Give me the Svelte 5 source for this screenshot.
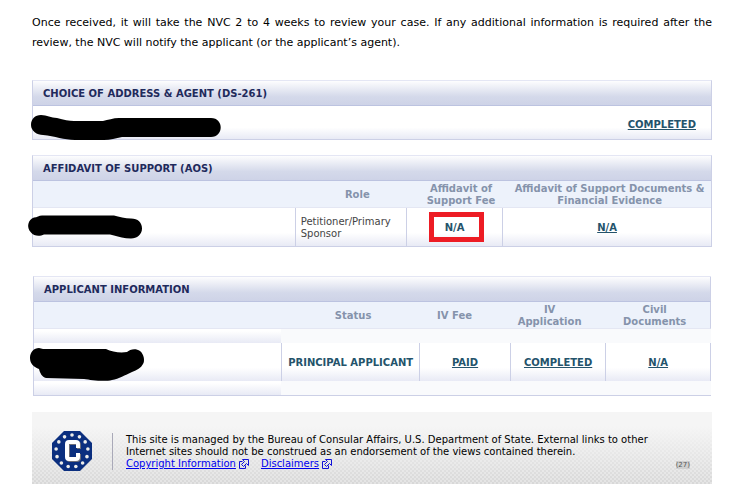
<script lang="ts">
  const stars = Array.from({ length: 13 }, (_, i) => {
    const angle = (i / 13) * Math.PI * 2 - Math.PI / 2;
    return { x: 20 + Math.cos(angle) * 16, y: 20 + Math.sin(angle) * 16 };
  });

  const footerLinks = ['Copyright Information', 'Disclaimers'];
</script>

<main>
  <p class="intro">
    Once received, it will take the NVC 2 to 4 weeks to review your case. If any additional
    information is required after the review, the NVC will notify the applicant (or the
    applicant’s agent).
  </p>

  <section class="panel address">
    <h2>CHOICE OF ADDRESS &amp; AGENT (DS-261)</h2>
    <div class="address-row shaded">
      <svg class="redaction" width="194" height="28" viewBox="29 109 194 28" aria-hidden="true">
        <path d="M41 115 C47 115 51 118 57 118 C64 120 69 121 74 121 L103 121 C108 120 113 118 119 118 L211 118 C224 118 224 137 211 137 L122 137 C116 138 110 140 104 140 L75 140 C64 140 55 136 43 135 C37 135 31 131 31 125 C31 119 35 115 41 115 Z" />
      </svg>
      <a href="#ds261">COMPLETED</a>
    </div>
  </section>

  <section class="panel affidavit">
    <h2>AFFIDAVIT OF SUPPORT (AOS)</h2>
    <table>
      <colgroup>
        <col class="w-name" /><col class="w-role" /><col class="w-fee" /><col />
      </colgroup>
      <thead>
        <tr>
          <th></th>
          <th class="role-head">Role</th>
          <th class="fee-head">Affidavit of<br />Support Fee</th>
          <th class="evidence-head">Affidavit of Support Documents &amp;<br />Financial Evidence</th>
        </tr>
      </thead>
      <tbody>
        <tr class="shaded">
          <td>
            <svg class="redaction" width="116" height="25" viewBox="29 214 116 25" aria-hidden="true">
              <path d="M42 215 L114 215 C119 216 125 218 131 218 C138 218 142 222 142 228 C142 234 137 238 131 238 C124 238 119 236 114 235 L110 234 L44 234 C40 236 34 236 31 232 C26 227 28 219 34 217 C37 217 39 215 42 215 Z" />
            </svg>
          </td>
          <td class="role">Petitioner/Primary Sponsor</td>
          <td><a class="plain" href="#fee">N/A</a><span class="marker"></span></td>
          <td><a href="#evidence">N/A</a></td>
        </tr>
      </tbody>
    </table>
  </section>

  <section class="panel applicants">
    <h2>APPLICANT INFORMATION</h2>
    <table>
      <colgroup>
        <col class="w-applicant" /><col class="w-status" /><col class="w-iv" /><col class="w-app" /><col />
      </colgroup>
      <thead>
        <tr>
          <th></th>
          <th class="status-head">Status</th>
          <th class="iv-head">IV Fee</th>
          <th class="app-head">IV<br />Application</th>
          <th class="civil-head">Civil<br />Documents</th>
        </tr>
      </thead>
      <tbody>
        <tr class="spacer"><td class="shaded"></td><td colspan="4"></td></tr>
        <tr class="shaded">
          <td>
            <svg class="redaction" width="116" height="34" viewBox="30 345 116 34" aria-hidden="true">
              <path d="M39 348 L43 349 L106 349 C112 352 120 353 127 352 C130 349 136 348 140 351 C144 354 145 361 143 364 C141 368 137 370 132 372 C125 375 119 379 112 380 C104 382 91 380 84 379 L46 378 C42 377 40 373 39 369 C34 367 30 364 30 358 C30 352 34 348 39 348 Z" />
            </svg>
          </td>
          <td class="status">PRINCIPAL APPLICANT</td>
          <td><a href="#paid">PAID</a></td>
          <td><a href="#application">COMPLETED</a></td>
          <td><a href="#documents">N/A</a></td>
        </tr>
        <tr class="spacer"><td class="shaded"></td><td colspan="4"></td></tr>
      </tbody>
    </table>
  </section>

  <footer>
    <svg class="seal" width="40" height="40" viewBox="0 0 40 40" role="img" aria-label="Consular Affairs">
      <polygon points="12,0 28,0 40,12 40,28 28,40 12,40 0,28 0,12" fill="#0b2f7f" />
      {#each stars as star}
        <circle cx={star.x} cy={star.y} r="1.8" fill="#eeeeea" />
      {/each}
      <path d="M27 18 V14 Q27 12 25 12 H18 Q16 12 16 14 V27 Q16 29 18 29 H25 Q27 29 27 27 V23" fill="none" stroke="#6f6f78" stroke-width="4" />
      <path d="M26 17 V13 Q26 11 24 11 H17 Q15 11 15 13 V26 Q15 28 17 28 H24 Q26 28 26 26 V22" fill="none" stroke="#fff" stroke-width="4" />
    </svg>
    <div class="notice">
      <p>
        This site is managed by the Bureau of Consular Affairs, U.S. Department of State. External links to other
        Internet sites should not be construed as an endorsement of the views contained therein.
      </p>
      <nav>
        {#each footerLinks as link}
          <span class="link">
            <a href="#{link}">{link}</a>
            <svg width="10" height="10" viewBox="0 0 10 10" fill="none" stroke="#1010d8" aria-hidden="true">
              <path d="M3.500 2.500 H0.500 V9.500 H6.500 V6.500" />
              <path d="M3.500 0.500 H9.500 V6.500 L7.500 4.500 L4.500 7.500 L2.500 5.500 L5.500 2.500 Z" />
            </svg>
          </span>
        {/each}
      </nav>
    </div>
    <small>(27)</small>
  </footer>
</main>

<style>
  :global(body) {
    background: #fff;
  }

  main {
    padding: 13px 26px 0 32px;
    font-family: Verdana, 'DejaVu Sans', sans-serif;
    font-size: 10px;
    line-height: 12px;
    color: #000;
  }

  .intro {
    margin: 0 0 27px;
    font-size: 11px;
    line-height: 20px;
    text-align: justify;
  }

  .panel {
    border: 1px solid #ccd0e6;
    border-top-color: #e4e6f4;
  }

  h2 {
    margin: 0;
    padding: 2px 10px 0;
    border-bottom: 1px solid #bcc3e0;
    background: linear-gradient(#fdfdfe, #d4d9ea 65%, #ced3e7);
    color: #1f2a5c;
    font-size: 10px;
    font-weight: bold;
    line-height: 22px;
  }

  .shaded {
    background: linear-gradient(#fff 65%, #e8eaf5);
  }

  .address {
    margin-bottom: 15px;
  }

  .address-row {
    position: relative;
    display: flex;
    align-items: center;
    justify-content: flex-end;
    box-sizing: border-box;
    height: 33px;
    padding: 4px 15px 0 0;
  }

  .panel a,
  .status {
    color: #24536b;
    font-weight: bold;
  }

  .panel a.plain {
    text-decoration: none;
  }

  table {
    width: 100%;
    table-layout: fixed;
    border-collapse: separate;
    border-spacing: 0;
  }

  th,
  td {
    box-sizing: border-box;
    padding: 2px 0 0;
  }

  th {
    height: 27px;
    border-bottom: 1px solid #e4e7f3;
    background: #edf2fb;
    color: #8593ab;
    white-space: nowrap;
  }

  td {
    position: relative;
    height: 38px;
    text-align: center;
  }

  td + td {
    border-left: 1px solid #ccd0e6;
  }

  .spacer td {
    height: 14px;
    border-left: 0;
  }

  .spacer .shaded {
    background: linear-gradient(#fff 15%, #e8eaf5);
  }

  .spacer td + td {
    background: #f9fafc;
  }

  .w-name {
    width: 38.6%;
  }

  .w-role {
    width: 16.4%;
  }

  .w-fee {
    width: 14.2%;
  }

  .w-applicant {
    width: 36.5%;
  }

  .w-status {
    width: 20.4%;
  }

  .w-iv {
    width: 13.4%;
  }

  .w-app {
    width: 14.1%;
  }

  .affidavit {
    margin-bottom: 29px;
  }

  .applicants {
    margin: 0 1px 16px;
    border-right: 0;
  }

  .applicants h2,
  .applicants th:last-child,
  .applicants tr:not(.spacer) td:last-child {
    border-right: 1px solid #ccd0e6;
  }

  .role-head,
  .fee-head {
    padding-left: 14px;
  }

  .evidence-head,
  .status-head {
    padding-left: 6px;
  }

  .iv-head {
    padding-right: 20px;
  }

  .app-head {
    padding-right: 16px;
  }

  .civil-head {
    padding-right: 6px;
  }

  .role {
    padding: 2px 5px 0;
    color: #444;
    text-align: left;
  }

  .status {
    white-space: nowrap;
  }

  .redaction {
    position: absolute;
    top: 50%;
    left: -4px;
    overflow: visible;
    transform: translateY(-50%);
  }

  .marker {
    position: absolute;
    top: 4px;
    left: 22px;
    width: 45px;
    height: 20px;
    border: 5px solid #ed1c24;
  }

  footer {
    display: flex;
    align-items: flex-start;
    min-height: 53px;
    padding: 19px 22px 0 20px;
    background:
      linear-gradient(#f5f5f5 20%, rgb(245 245 245 / 0%)),
      repeating-conic-gradient(#d8d8d8 0 25%, #e4e4e4 0 50%) 0 0 / 4px 4px;
  }

  .seal {
    flex: none;
  }

  .notice {
    flex: 1;
    margin: 2px 0 0 20px;
    padding: 1px 0 0 13px;
    border-left: 1px solid #a9a9b8;
  }

  .notice p {
    max-width: 544px;
    margin: 0;
  }

  nav {
    display: flex;
    gap: 12px;
  }

  .link {
    display: flex;
    align-items: center;
    gap: 3px;
  }

  .link a {
    color: #00e;
  }

  small {
    align-self: flex-end;
    margin-bottom: 15px;
    background: #d0d0d0;
    color: #555;
    font-size: 7px;
    line-height: 8px;
  }
</style>
